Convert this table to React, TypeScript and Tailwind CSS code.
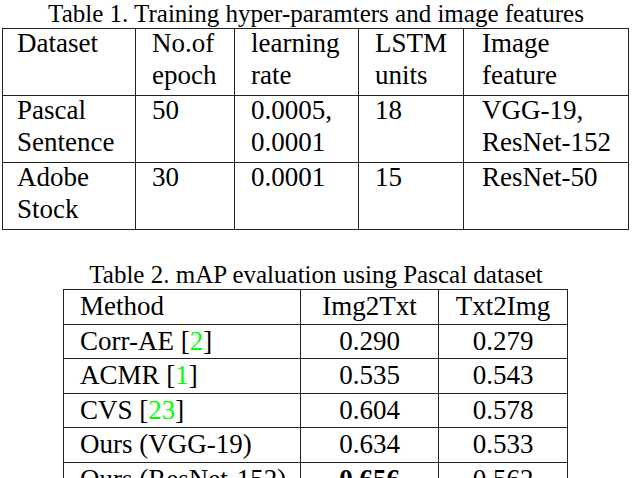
const CITE = "text-[#00ff00]";

const table1 = [
  ["Dataset", "No.of epoch", "learning rate", "LSTM units", "Image feature"],
  ["Pascal Sentence", "50", "0.0005, 0.0001", "18", "VGG-19, ResNet-152"],
  ["Adobe Stock", "30", "0.0001", "15", "ResNet-50"],
];

const t1Pad = ["pl-[14px]", "pl-4", "pl-4", "pl-4", "pl-[18px]"];

type Row2 = { method: string; cite?: string; a: string; b: string; bold?: boolean };

const table2: Row2[] = [
  { method: "Corr-AE", cite: "2", a: "0.290", b: "0.279" },
  { method: "ACMR", cite: "1", a: "0.535", b: "0.543" },
  { method: "CVS", cite: "23", a: "0.604", b: "0.578" },
  { method: "Ours (VGG-19)", a: "0.634", b: "0.533" },
  { method: "Ours (ResNet-152)", a: "0.656", b: "0.562", bold: true },
];

export default function App() {
  return (
    <div
      className="w-[632px] h-[478px] overflow-hidden bg-white text-black"
      style={{ fontFamily: '"Liberation Serif", "Times New Roman", serif' }}
    >
      {/* Table 1 */}
      <p className="text-center text-[25px] leading-[28px]">
        Table 1. Training hyper-paramters and image features
      </p>
      <div className="ml-[2px] w-[627px] grid grid-cols-[133px_99px_124px_105px_165px] border-l border-t border-[#222]">
        {table1.map((row, r) =>
          row.map((cell, c) => (
            <div
              key={`${r}-${c}`}
              className={`border-r border-b border-[#222] text-[27px] leading-[32px] pb-[4px] ${t1Pad[c]}`}
            >
              <div className="-mt-[2px]">
                {cell.split(" ").map((w, i) => (
                  <div key={i}>{w}</div>
                ))}
              </div>
            </div>
          ))
        )}
      </div>

      {/* Table 2 */}
      <p className="mt-[31px] text-center text-[25px] leading-[28px]">
        Table 2. mAP evaluation using Pascal dataset
      </p>
      <div className="ml-[63px] w-[505px] grid grid-cols-[237px_138px_129px] border-l border-t border-[#222] text-[27px] leading-[32px]">
        <div className="border-r border-b border-[#222] pl-4 pb-[1.5px]">Method</div>
        <div className="border-r border-b border-[#222] text-center pb-[1.5px]">Img2Txt</div>
        <div className="border-r border-b border-[#222] text-center pb-[1.5px]">Txt2Img</div>
        {table2.map((row) => (
          <div key={row.method} className="contents">
            <div className="border-r border-b border-[#222] pl-4 pb-[1.5px] whitespace-nowrap">
              {row.method}
              {row.cite && (
                <>
                  {" "}[<span className={CITE}>{row.cite}</span>]
                </>
              )}
            </div>
            <div className={`border-r border-b border-[#222] text-center pb-[1.5px] ${row.bold ? "font-bold" : ""}`}>
              {row.a}
            </div>
            <div className="border-r border-b border-[#222] text-center pb-[1.5px]">{row.b}</div>
          </div>
        ))}
      </div>
    </div>
  );
}
